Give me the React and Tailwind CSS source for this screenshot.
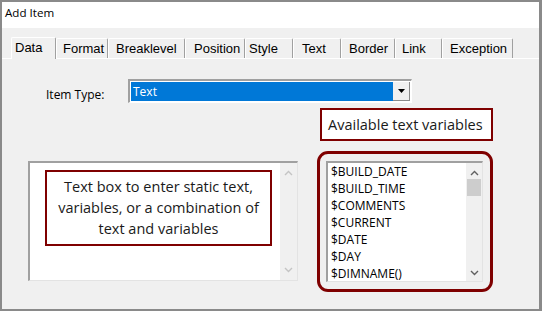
import React from 'react';

const tabs = [
    { label: 'Data', w: 'w-[45px]', pl: 'pl-[3px]', active: true },
    { label: 'Format', w: 'w-[52px]', pl: 'pl-[6px]' },
    { label: 'Breaklevel', w: 'w-[77px]', pl: 'pl-[7px]' },
    { label: 'Position', w: 'w-[60px]', pl: 'pl-[8px]' },
    { label: 'Style', w: 'w-[48px]', pl: 'pl-[3px]' },
    { label: 'Text', w: 'w-[48px]', pl: 'pl-[8px]' },
    { label: 'Border', w: 'w-[54px]', pl: 'pl-[7px]' },
    { label: 'Link', w: 'w-[47px]', pl: 'pl-[6px]' },
    { label: 'Exception', w: 'w-[71px]', pl: 'pl-[7px]' },
];

const variables = ['$BUILD_DATE', '$BUILD_TIME', '$COMMENTS', '$CURRENT', '$DATE', '$DAY', '$DIMNAME()'];

const Chevron = ({ up, color }) => (
    <svg width="9" height="6" viewBox="0 0 9 6" className="block">
        <polyline
            points={up ? '1,5 4.5,1.5 8,5' : '1,1 4.5,4.5 8,1'}
            fill="none"
            stroke={color}
            strokeWidth="1.4"
        />
    </svg>
);

const App = () => {
    return (
        <div className="w-[542px] h-[311px] bg-[#f0f0f0] border-l-2 border-t-2 border-b-2 border-r-[3px] border-[#8a8a8a] overflow-hidden font-['Open_Sans',sans-serif] text-black">
            {/* Title bar */}
            <div className="h-[26px] bg-white pl-[3px] pt-[3px] text-[11.6px] leading-[16px]">Add Item</div>

            {/* Tabs */}
            <div className="flex items-end pl-[9px] mt-[9px] font-['Liberation_Sans',Arial,sans-serif] text-[13px] leading-[15px]">
                {tabs.map((t) => (
                    <div
                        key={t.label}
                        className={`${t.w} ${t.pl} ${t.active ? 'h-[22px] relative z-10 -mb-px bg-[#f0f0f0]' : 'h-[20px]'} pt-[2px] border-l border-t border-white border-r border-r-[#a0a0a0] rounded-t-[2px]`}
                    >
                        {t.label}
                    </div>
                ))}
            </div>

            {/* Panel */}
            <div className="border-t border-white">
                {/* Item Type row */}
                <div className="flex items-start mt-[20px] pl-[44px]">
                    <div className="w-[82px] pt-[7px] text-[12px] leading-[17px]">Item Type:</div>
                    <div className="w-[284px] h-[24px] flex border-t-2 border-l-2 border-[#a0a0a0] border-b border-r border-b-white border-r-white bg-white p-px">
                        <div className="flex-1 bg-[#0078d7] text-white text-[12px] leading-[19px] pl-[2px]">Text</div>
                        <div className="w-[17px] bg-[#f0f0f0] border-r border-b border-[#8a8a8a] flex items-center justify-center">
                            <svg width="7" height="4" viewBox="0 0 7 4">
                                <polygon points="0,0 7,0 3.5,4" fill="#000" />
                            </svg>
                        </div>
                    </div>
                </div>

                {/* Available text variables callout */}
                <div className="mt-[5px] ml-[318px] w-[173px] h-[33px] bg-white border-[2.5px] border-[#7f0000] flex items-center pl-[6px] text-[14.5px] leading-[20px] text-[#1a1a1a]">
                    Available text variables
                </div>

                {/* Bottom row */}
                <div className="flex items-start pl-[26px] mt-[10px]">
                    {/* Text box */}
                    <div className="mt-[10px] w-[270px] h-[120px] flex bg-white border-t-2 border-l-2 border-[#a0a0a0] border-b border-r border-b-[#e3e3e3] border-r-[#e3e3e3]">
                        <div className="flex-1 pl-[15px] pt-[7px]">
                            <div className="w-[227px] h-[76px] border-2 border-[#7f0000] pt-[4px] text-center text-[14.5px] leading-[21px] text-[#1a1a1a]">
                                <div>Text box to enter static text,</div>
                                <div>variables, or a combination of</div>
                                <div>text and variables</div>
                            </div>
                        </div>
                        <div className="w-[17px] bg-[#f0f0f0] flex flex-col items-center justify-between py-[7px]">
                            <Chevron up color="#c4c4c4" />
                            <Chevron color="#c4c4c4" />
                        </div>
                    </div>

                    {/* Variables list */}
                    <div className="ml-[19px] w-[176px] h-[141px] border-[3px] border-[#7f0000] rounded-[11px] pl-[6px] pt-[7px]">
                        <div className="w-[157px] h-[121px] flex bg-white border-t-2 border-l-2 border-[#a0a0a0] border-b border-r border-b-[#e3e3e3] border-r-[#e3e3e3] overflow-hidden">
                            <div className="flex-1 pl-[3px] text-[12px] leading-[17px]">
                                {variables.map((v) => (
                                    <div key={v}>{v}</div>
                                ))}
                            </div>
                            <div className="w-[16px] bg-[#f0f0f0] flex flex-col items-center pt-[7px] pb-[5px]">
                                <Chevron up color="#606060" />
                                <div className="mt-[3px] w-[14px] h-[17px] bg-[#cdcdcd]" />
                                <div className="flex-1" />
                                <Chevron color="#606060" />
                            </div>
                        </div>
                    </div>
                </div>
            </div>
        </div>
    );
};

export default App;
